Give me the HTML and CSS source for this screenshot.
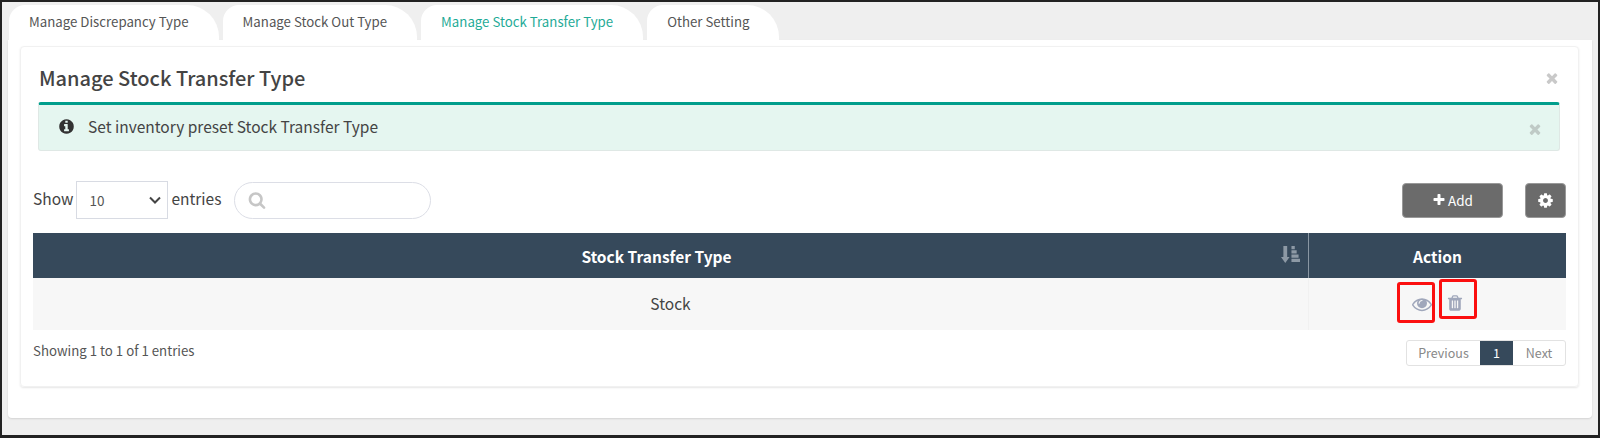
FILE: index.html
```html
<!DOCTYPE html>
<html lang="en">
<head>
  <meta charset="UTF-8" />
  <meta name="viewport" content="width=device-width, initial-scale=1.0" />
  <title>Manage Stock Transfer Type</title>
  <link rel="stylesheet" href="styles.css">
</head>
<body>
  <svg class="sprite" xmlns="http://www.w3.org/2000/svg">
    <symbol id="i-cog" viewBox="0 0 1792 1792"><path d="M1152 896q0-106-75-181t-181-75-181 75-75 181 75 181 181 75 181-75 75-181zm512-109v222q0 12-8 23t-20 13l-185 28q-19 54-39 91 35 50 107 138 10 12 10 25t-9 23q-27 37-99 108t-94 71q-12 0-26-9l-138-108q-44 23-91 38-16 136-29 186-7 28-36 28h-222q-14 0-24.5-8.5t-11.5-21.5l-28-184q-49-16-90-37l-141 107q-10 9-25 9-14 0-25-11-126-114-165-168-7-10-7-23 0-12 8-23 15-21 51-66.5t54-70.5q-27-50-41-99l-183-27q-13-2-21-12.5t-8-23.5v-222q0-12 8-23t19-13l186-28q14-46 39-92-40-57-107-138-10-12-10-24 0-10 9-23 26-36 98.5-107.5t94.5-71.5q13 0 26 10l138 107q44-23 91-38 16-136 29-186 7-28 36-28h222q14 0 24.5 8.5t11.5 21.5l28 184q49 16 90 37l142-107q9-9 24-9 13 0 25 10 129 119 165 170 7 8 7 22 0 12-8 23-15 21-51 66.5t-54 70.5q26 50 41 98l183 28q13 2 21 12.5t8 23.5z"/></symbol>
    <symbol id="i-eye" viewBox="0 0 1792 1792"><path d="M1664 960q-152-236-381-353 61 104 61 225 0 185-131.5 316.5t-316.5 131.5-316.5-131.5-131.5-316.5q0-121 61-225-229 117-381 353 133 205 333.5 326.5t434.5 121.5 434.5-121.5 333.5-326.5zm-720-384q0-20-14-34t-34-14q-125 0-214.5 89.5t-89.5 214.5q0 20 14 34t34 14 34-14 14-34q0-86 61-147t147-61q20 0 34-14t14-34zm848 384q0 34-20 69-140 230-376.5 368.5t-499.5 138.5-499.5-139-376.5-368q-20-35-20-69t20-69q140-229 376.5-368t499.5-139 499.5 139 376.5 368q20 35 20 69z"/></symbol>
    <symbol id="i-trash" viewBox="0 0 1792 1792"><path d="M704 1376v-704q0-14-9-23t-23-9h-64q-14 0-23 9t-9 23v704q0 14 9 23t23 9h64q14 0 23-9t9-23zm256 0v-704q0-14-9-23t-23-9h-64q-14 0-23 9t-9 23v704q0 14 9 23t23 9h64q14 0 23-9t9-23zm256 0v-704q0-14-9-23t-23-9h-64q-14 0-23 9t-9 23v704q0 14 9 23t23 9h64q14 0 23-9t9-23zm-544-992h448l-48-117q-7-9-17-11h-317q-10 2-17 11zm928 32v64q0 14-9 23t-23 9h-96v948q0 83-47 143.5t-113 60.5h-832q-66 0-113-58.5t-47-141.5v-952h-96q-14 0-23-9t-9-23v-64q0-14 9-23t23-9h309l70-167q15-37 54-63t79-26h320q40 0 79 26t54 63l70 167h309q14 0 23 9t9 23z"/></symbol>
    <symbol id="i-info" viewBox="0 0 1792 1792"><path d="M1152 1376v-160q0-14-9-23t-23-9h-96v-512q0-14-9-23t-23-9h-320q-14 0-23 9t-9 23v160q0 14 9 23t23 9h96v320h-96q-14 0-23 9t-9 23v160q0 14 9 23t23 9h448q14 0 23-9t9-23zm-128-896v-160q0-14-9-23t-23-9h-192q-14 0-23 9t-9 23v160q0 14 9 23t23 9h192q14 0 23-9t9-23zm640 416q0 209-103 385.5t-279.5 279.5-385.5 103-385.5-103-279.5-279.5-103-385.5 103-385.5 279.5-279.5 385.5-103 385.5 103 279.5 279.5 103 385.5z"/></symbol>
    <symbol id="i-plus" viewBox="0 0 1792 1792"><path d="M1600 736v192q0 40-28 68t-68 28h-416v416q0 40-28 68t-68 28h-192q-40 0-68-28t-28-68v-416h-416q-40 0-68-28t-28-68v-192q0-40 28-68t68-28h416v-416q0-40 28-68t68-28h192q40 0 68 28t28 68v416h416q40 0 68 28t28 68z"/></symbol>
    <symbol id="i-search" viewBox="0 0 1792 1792"><path d="M1216 832q0-185-131.5-316.5t-316.5-131.5-316.5 131.5-131.5 316.5 131.5 316.5 316.5 131.5 316.5-131.5 131.5-316.5zm512 832q0 52-38 90t-90 38q-54 0-90-38l-343-342q-179 124-399 124-143 0-273.5-55.5t-225-150-150-225-55.5-273.5 55.5-273.5 150-225 225-150 273.5-55.5 273.5 55.5 225 150 150 225 55.5 273.5q0 220-124 399l343 343q37 37 37 90z"/></symbol>
    <symbol id="i-times" viewBox="0 0 1792 1792"><path d="M1490 1322q0 40-28 68l-136 136q-28 28-68 28t-68-28l-294-294-294 294q-28 28-68 28t-68-28l-136-136q-28-28-28-68t28-68l294-294-294-294q-28-28-28-68t28-68l136-136q28-28 68-28t68 28l294 294 294-294q28-28 68-28t68 28l136 136q28 28 28 68t-28 68l-294 294 294 294q28 28 28 68z"/></symbol>
    <symbol id="i-sort" viewBox="0 0 20 20"><path d="M2.5 1h4v11.5h2.500l-4.500 6.500L0 12.500h2.500zM11 1h3.500v3.500H11zM11 5.500h5.500V9H11zM11 10h7.500v3.500H11zM11 14.500h9V18h-9z"/></symbol>
    <symbol id="i-chevron" viewBox="0 0 12 8"><path d="M1 1.500l5 5 5-5" fill="none" stroke="currentColor" stroke-width="2"/></symbol>
  </svg>

  <div class="frame">
    <div class="tabs">
      <div class="tab">Manage Discrepancy Type</div>
      <div class="tab">Manage Stock Out Type</div>
      <div class="tab active">Manage Stock Transfer Type</div>
      <div class="tab">Other Setting</div>
    </div>

    <div class="panel">
      <div class="card">
        <div class="card-head">
          <h2 class="card-title">Manage Stock Transfer Type</h2>
          <svg class="close-icon"><use href="#i-times"/></svg>
        </div>

        <div class="alert">
          <svg class="info-icon"><use href="#i-info"/></svg>
          <span class="alert-text">Set inventory preset Stock Transfer Type</span>
          <svg class="close-icon alert-close"><use href="#i-times"/></svg>
        </div>

        <div class="toolbar">
          <span class="label">Show</span>
          <div class="select-wrap">
            <select class="length-select"><option>10</option></select>
            <svg class="chevron"><use href="#i-chevron"/></svg>
          </div>
          <span class="label">entries</span>
          <div class="search">
            <svg class="search-icon"><use href="#i-search"/></svg>
          </div>
          <div class="toolbar-right">
            <button class="btn btn-add"><svg class="plus-icon"><use href="#i-plus"/></svg>Add</button>
            <button class="btn btn-cog"><svg class="cog-icon"><use href="#i-cog"/></svg></button>
          </div>
        </div>

        <table class="data-table">
          <thead>
            <tr>
              <th class="col-type">Stock Transfer Type<svg class="sort-icon"><use href="#i-sort"/></svg></th>
              <th class="col-action">Action</th>
            </tr>
          </thead>
          <tbody>
            <tr>
              <td>Stock</td>
              <td class="action-cell">
                <svg class="eye-icon"><use href="#i-eye"/></svg>
                <svg class="trash-icon"><use href="#i-trash"/></svg>
                <span class="mark mark-eye"></span>
                <span class="mark mark-trash"></span>
              </td>
            </tr>
          </tbody>
        </table>

        <div class="table-foot">
          <div class="info-text">Showing 1 to 1 of 1 entries</div>
          <div class="pager">
            <span class="page page-prev">Previous</span>
            <span class="page page-current">1</span>
            <span class="page page-next">Next</span>
          </div>
        </div>
      </div>
    </div>
  </div>
</body>
</html>
```

FILE: styles.css
```css
html, body {
  margin: 0;
  height: 100%;
}
body {
  font-family: "Noto Sans CJK SC", "Noto Sans", sans-serif;
  color: #444;
  background: #fff;
}
.sprite {
  display: none;
}
svg {
  fill: currentColor;
}
.frame {
  box-sizing: border-box;
  height: 438px;
  background: #efefef;
  border: solid #222;
  border-width: 2px 2px 3px 2px;
  padding: 3px 6px 0 7px;
  overflow: hidden;
}

/* tabs */
.tabs {
  display: flex;
  gap: 4px;
  height: 35px;
}
.tab {
  background: #fff;
  border-radius: 16px 32px 0 0;
  padding: 0 30px 0 20px;
  font-size: 13.25px;
  line-height: 34px;
  color: #555;
}
.tab.active {
  color: #1fab97;
}

/* panel + card */
.panel {
  background: #fff;
  margin-left: -1px;
  height: 378px;
  box-sizing: border-box;
  padding: 6px 13px 0 12px;
  border-radius: 0 0 4px 4px;
  box-shadow: 0 1px 2px rgba(0,0,0,.12);
}
.card {
  box-sizing: border-box;
  height: 341px;
  border: 1px solid #f1f1f1;
  border-radius: 4px;
  box-shadow: 0 1px 2px rgba(0,0,0,.1);
  padding: 0 12px;
}
.card-head {
  display: flex;
  justify-content: space-between;
  align-items: center;
  height: 55px;
  padding: 5px 6px 0;
  box-sizing: border-box;
}
.card-title {
  margin: 0;
  font-size: 20px;
  font-weight: 500;
  color: #444;
}
.close-icon {
  width: 16px;
  height: 16px;
  color: #c9c9c9;
  margin-top: 2px;
}

/* alert */
.alert {
  box-sizing: border-box;
  display: flex;
  align-items: center;
  height: 49px;
  margin: 0 6px 0 5px;
  padding: 0 18px 3px 19px;
  background: #e5f6f0;
  border: 1px solid #dfe8e5;
  border-top: 3px solid #009e8c;
  border-radius: 3px;
}
.info-icon {
  width: 17px;
  height: 17px;
  color: #333;
  margin-right: 13px;
}
.alert-text {
  font-size: 15.5px;
  color: #444;
  flex: 1;
}
.alert-close {
  color: #bfcac6;
  margin-right: -2px;
  margin-top: 6px;
}

/* show entries row */
.toolbar {
  display: flex;
  align-items: center;
  height: 38px;
  margin-top: 30px;
}
.label {
  font-size: 15.5px;
  color: #444;
  position: relative;
  top: -2px;
}
.select-wrap {
  position: relative;
  margin: 0 3px;
}
.length-select {
  display: block;
  appearance: none;
  box-sizing: border-box;
  width: 92px;
  height: 38px;
  padding: 0 12px;
  background: #fff;
  border: 1px solid #d8dbe3;
  border-radius: 0;
  font-family: inherit;
  font-size: 13.5px;
  color: #555;
}
.chevron {
  position: absolute;
  right: 7px;
  top: 15px;
  width: 12px;
  height: 8px;
  color: #444;
  pointer-events: none;
}
.search {
  box-sizing: border-box;
  display: flex;
  align-items: center;
  width: 197px;
  height: 37px;
  margin-left: 13px;
  padding-left: 13px;
  border: 1px solid #dcdee6;
  border-radius: 19px;
}
.search-icon {
  width: 18px;
  height: 18px;
  color: #c6c6c6;
}
.toolbar-right {
  display: flex;
  gap: 22px;
  margin-left: auto;
}
.btn {
  box-sizing: border-box;
  height: 35px;
  display: flex;
  align-items: center;
  justify-content: center;
  background: #6b6b6b;
  color: #fff;
  border: 1px solid #999;
  border-radius: 4px;
  font-family: inherit;
  font-size: 13.5px;
  padding: 0;
}
.btn-add {
  width: 101px;
}
.btn-cog {
  width: 41px;
}
.plus-icon {
  width: 14px;
  height: 14px;
  margin-right: 2px;
}
.cog-icon {
  width: 17px;
  height: 17px;
}

/* table */
.data-table {
  width: 100%;
  margin-top: 14px;
  border-collapse: collapse;
  table-layout: fixed;
}
.data-table th {
  height: 45px;
  padding: 0;
  background: #36495b;
  color: #fff;
  font-size: 15.5px;
  font-weight: 700;
  text-align: center;
}
.col-type {
  position: relative;
  padding-right: 28px !important;
  border-right: 1px solid #8a97a3;
}
.col-action {
  width: 257px;
}
.sort-icon {
  position: absolute;
  right: 8px;
  top: 12px;
  width: 19px;
  height: 19px;
  color: #8d99a5;
}
.data-table td {
  height: 52px;
  padding: 0 0 2px;
  box-sizing: border-box;
  background: #f7f7f7;
  text-align: center;
  font-size: 15.5px;
  color: #444;
}
.action-cell {
  position: relative;
  border-left: 1px solid #f1f1f1;
}
.eye-icon,
.trash-icon {
  position: absolute;
  top: 16px;
  color: #a0a7bb;
}
.eye-icon {
  left: 103px;
  width: 20px;
  height: 20px;
}
.trash-icon {
  left: 137px;
  width: 18px;
  height: 18px;
}
.mark {
  position: absolute;
  box-sizing: border-box;
  border: 3px solid #fb0f0f;
  border-radius: 3px;
}
.mark-eye {
  left: 88px;
  top: 4px;
  width: 38px;
  height: 41px;
}
.mark-trash {
  left: 130px;
  top: 1px;
  width: 38px;
  height: 40px;
}

/* footer */
.table-foot {
  display: flex;
  justify-content: space-between;
  align-items: flex-start;
  margin-top: 10px;
}
.info-text {
  font-size: 13.25px;
  color: #555;
  line-height: 22px;
}
.pager {
  display: flex;
  box-sizing: border-box;
  height: 26px;
  border: 1px solid #e2e2e2;
  border-radius: 3px;
  font-size: 12.5px;
  color: #888;
  line-height: 24px;
}
.page {
  text-align: center;
}
.page-prev {
  width: 73px;
}
.page-current {
  width: 33px;
  background: #36495b;
  color: #fff;
}
.page-next {
  width: 52px;
}
```
